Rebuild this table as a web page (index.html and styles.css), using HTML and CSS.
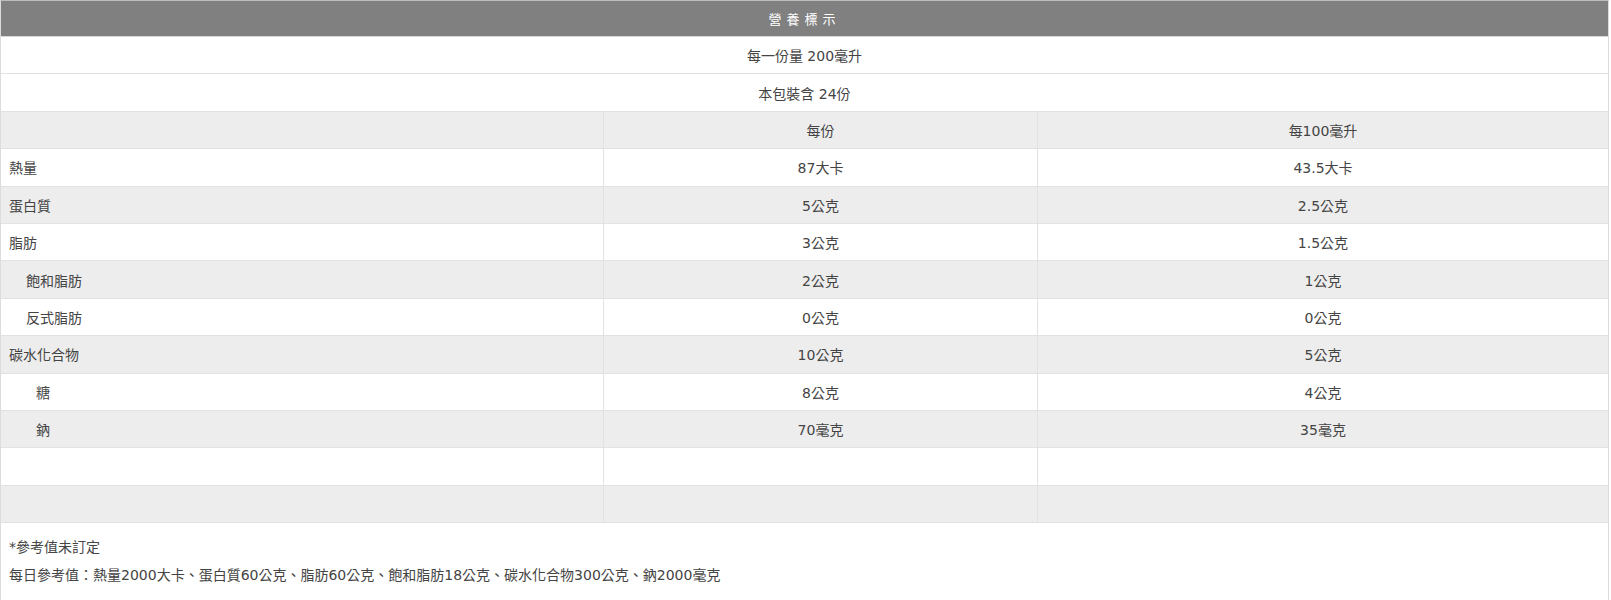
FILE: index.html
```html
<!DOCTYPE html>
<html lang="zh-Hant">
<head>
<meta charset="utf-8">
<title>營養標示</title>
<link rel="stylesheet" href="styles.css">
</head>
<body>
<div class="nutrition">
  <div class="title">營養標示</div>
  <div class="row full white">每一份量 200毫升</div>
  <div class="row full white">本包裝含 24份</div>
  <div class="row grid gray"><span class="c1"></span><span class="c2">每份</span><span class="c3">每100毫升</span></div>
  <div class="row grid white"><span class="c1">熱量</span><span class="c2">87大卡</span><span class="c3">43.5大卡</span></div>
  <div class="row grid gray"><span class="c1">蛋白質</span><span class="c2">5公克</span><span class="c3">2.5公克</span></div>
  <div class="row grid white"><span class="c1">脂肪</span><span class="c2">3公克</span><span class="c3">1.5公克</span></div>
  <div class="row grid gray"><span class="c1 ind1">飽和脂肪</span><span class="c2">2公克</span><span class="c3">1公克</span></div>
  <div class="row grid white"><span class="c1 ind1">反式脂肪</span><span class="c2">0公克</span><span class="c3">0公克</span></div>
  <div class="row grid gray"><span class="c1">碳水化合物</span><span class="c2">10公克</span><span class="c3">5公克</span></div>
  <div class="row grid white"><span class="c1 ind2">糖</span><span class="c2">8公克</span><span class="c3">4公克</span></div>
  <div class="row grid gray"><span class="c1 ind2">鈉</span><span class="c2">70毫克</span><span class="c3">35毫克</span></div>
  <div class="row grid white"><span class="c1"></span><span class="c2"></span><span class="c3"></span></div>
  <div class="row grid gray"><span class="c1"></span><span class="c2"></span><span class="c3"></span></div>
  <div class="notes">
    <p>*參考值未訂定</p>
    <p>每日參考值：熱量2000大卡、蛋白質60公克、脂肪60公克、飽和脂肪18公克、碳水化合物300公克、鈉2000毫克</p>
  </div>
</div>
</body>
</html>
```

FILE: styles.css
```css
html, body {
  margin: 0;
  padding: 0;
  background: #ffffff;
}

body {
  font-family: "DejaVu Sans", "Noto Sans CJK TC", sans-serif;
  font-size: 14px;
  color: #444444;
}

.nutrition {
  width: 1609px;
  box-sizing: border-box;
  border-left: 1px solid #dcdcdc;
  border-right: 1px solid #dcdcdc;
  border-top: 1px solid #bdbdbd;
}

.title {
  height: 36px;
  box-sizing: border-box;
  background: #808080;
  border-bottom: 1px solid #d6d6d6;
  color: #ffffff;
  display: flex;
  align-items: center;
  justify-content: center;
  letter-spacing: 5px;
  font-size: 13px;
}

.row {
  height: 37.4px;
  box-sizing: border-box;
  border-bottom: 1px solid #e2e2e2;
}

.white { background: #ffffff; }
.gray { background: #ededed; }

.full {
  display: flex;
  align-items: center;
  justify-content: center;
}

.grid {
  display: grid;
  grid-template-columns: 602px 434px 1fr;
}

.grid > span {
  display: flex;
  align-items: center;
}

.c1 {
  padding-left: 8px;
}

.c2, .c3 {
  justify-content: center;
  border-left: 1px solid #e2e2e2;
}

.c1.ind1 { padding-left: 25px; }
.c1.ind2 { padding-left: 35px; }

.notes {
  padding: 10px 8px 20px;
  border-top: 1px solid #e2e2e2;
  margin-top: -1px;
}

.notes p {
  margin: 0;
  line-height: 28px;
}
```
